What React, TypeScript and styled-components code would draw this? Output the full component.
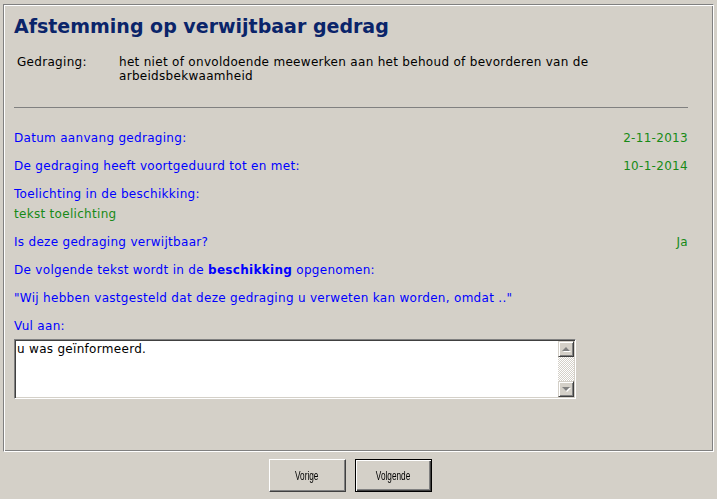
import React from 'react';
import styled, { createGlobalStyle } from 'styled-components';

const GlobalStyle = createGlobalStyle`
  html, body {
    margin: 0;
    padding: 0;
    background: #d4d0c8;
  }
  body {
    font-family: 'DejaVu Sans', Verdana, sans-serif;
  }
`;

const fields = {
  behaviour:
    'het niet of onvoldoende meewerken aan het behoud of bevorderen van de arbeidsbekwaamheid',
  startDate: '2-11-2013',
  endDate: '10-1-2014',
  explanation: 'tekst toelichting',
  blameworthy: 'Ja',
  completion: 'u was geïnformeerd.',
};

export default function App() {
  return (
    <>
      <GlobalStyle />
      <Screen>
        <Panel>
          <Title>Afstemming op verwijtbaar gedrag</Title>

          <BehaviourGrid>
            <BehaviourLabel>Gedraging:</BehaviourLabel>
            <BehaviourText>{fields.behaviour}</BehaviourText>
          </BehaviourGrid>

          <Divider />

          <Fields>
            <FieldRow>
              <span>Datum aanvang gedraging:</span>
              <Value>{fields.startDate}</Value>
            </FieldRow>
            <FieldRow>
              <span>De gedraging heeft voortgeduurd tot en met:</span>
              <Value>{fields.endDate}</Value>
            </FieldRow>
            <FieldBlock $gap={6}>
              <span>Toelichting in de beschikking:</span>
              <Value>{fields.explanation}</Value>
            </FieldBlock>
            <FieldRow>
              <span>Is deze gedraging verwijtbaar?</span>
              <Value>{fields.blameworthy}</Value>
            </FieldRow>
            <FieldRow>
              <span>
                De volgende tekst wordt in de <strong>beschikking</strong> opgenomen:
              </span>
            </FieldRow>
            <Quote>
              "Wij hebben vastgesteld dat deze gedraging u verweten kan worden, omdat .."
            </Quote>
            <FieldBlock $gap={6}>
              <span>Vul aan:</span>
              <Memo>
                <MemoInput defaultValue={fields.completion} spellCheck={false} />
                <ScrollBar>
                  <ScrollButton>
                    <Arrow $dir="up" />
                  </ScrollButton>
                  <ScrollTrack />
                  <ScrollButton>
                    <Arrow $dir="down" />
                  </ScrollButton>
                </ScrollBar>
              </Memo>
            </FieldBlock>
          </Fields>
        </Panel>

        <ButtonBar>
          <NavButton>
            <ButtonLabel>Vorige</ButtonLabel>
          </NavButton>
          <NavButton $default>
            <ButtonLabel>Volgende</ButtonLabel>
          </NavButton>
        </ButtonBar>
      </Screen>
    </>
  );
}

// Styled Components
const Screen = styled.div`
  width: 717px;
  height: 499px;
  box-sizing: border-box;
  padding: 4px 3px 0 3px;
  display: flex;
  flex-direction: column;
  background: #d4d0c8;
  overflow: hidden;
`;

const Panel = styled.div`
  box-sizing: border-box;
  height: 448px;
  border: 1px solid;
  border-color: #808080 #ffffff #ffffff #808080;
  box-shadow: inset 1px 1px 0 #ffffff, inset -1px -1px 0 #808080;
  padding: 9px 25px 0 10px;
  display: flex;
  flex-direction: column;
`;

const Title = styled.h1`
  margin: 0;
  font-size: 19px;
  line-height: 24px;
  font-weight: bold;
  color: #0a246a;
  white-space: nowrap;
`;

const BehaviourGrid = styled.div`
  display: grid;
  grid-template-columns: 102px 1fr;
  margin-top: 17px;
  padding-left: 3px;
  font-size: 12px;
  line-height: 14px;
  letter-spacing: 0.3px;
  color: #000000;
`;

const BehaviourLabel = styled.span``;

const BehaviourText = styled.span`
  max-width: 500px;
`;

const Divider = styled.div`
  height: 1px;
  background: #808080;
  margin: 24px 0 23px;
`;

const Fields = styled.div`
  display: flex;
  flex-direction: column;
  gap: 14px;
  font-size: 12px;
  line-height: 14px;
  letter-spacing: 0.3px;
  color: #0000ff;

  strong {
    font-weight: bold;
  }
`;

const FieldRow = styled.div`
  display: flex;
  justify-content: space-between;
`;

const FieldBlock = styled.div<{ $gap: number }>`
  display: flex;
  flex-direction: column;
  gap: ${({ $gap }) => $gap}px;
`;

const Value = styled.span`
  color: #178a17;
`;

const Quote = styled.div``;

const Memo = styled.div`
  box-sizing: border-box;
  width: 562px;
  height: 60px;
  display: flex;
  padding: 1px;
  border: 1px solid;
  border-color: #808080 #ffffff #ffffff #808080;
  box-shadow: inset 1px 1px 0 #404040, inset -1px -1px 0 #d4d0c8;
  background: #ffffff;
`;

const MemoInput = styled.textarea`
  flex: 1;
  border: none;
  outline: none;
  resize: none;
  overflow: hidden;
  margin: 0;
  padding: 1px 1px;
  background: transparent;
  font-family: 'DejaVu Sans', Verdana, sans-serif;
  font-size: 12px;
  line-height: 14px;
  letter-spacing: 0.3px;
  color: #000000;
`;

const ScrollBar = styled.div`
  width: 16px;
  display: flex;
  flex-direction: column;
`;

const ScrollButton = styled.div`
  box-sizing: border-box;
  height: 16px;
  display: flex;
  align-items: center;
  justify-content: center;
  background: #d4d0c8;
  border: 1px solid;
  border-color: #d4d0c8 #404040 #404040 #d4d0c8;
  box-shadow: inset 1px 1px 0 #ffffff, inset -1px -1px 0 #808080;
`;

const Arrow = styled.div<{ $dir: 'up' | 'down' }>`
  width: 0;
  height: 0;
  border-left: 4px solid transparent;
  border-right: 4px solid transparent;
  ${({ $dir }) =>
    $dir === 'up'
      ? 'border-bottom: 4px solid #808080;'
      : 'border-top: 4px solid #808080;'}
  filter: drop-shadow(1px 1px 0 #ffffff);
`;

const ScrollTrack = styled.div`
  flex: 1;
  background-color: #d4d0c8;
  background-image: conic-gradient(
    #ffffff 25%,
    #d4d0c8 0 50%,
    #ffffff 0 75%,
    #d4d0c8 0
  );
  background-size: 2px 2px;
`;

const ButtonBar = styled.div`
  display: flex;
  justify-content: center;
  gap: 9px;
  margin-top: 7px;
  padding-right: 17px;
`;

const NavButton = styled.button<{ $default?: boolean }>`
  box-sizing: border-box;
  width: 77px;
  height: 33px;
  padding: 0;
  display: flex;
  align-items: center;
  justify-content: center;
  background: #d4d0c8;
  color: #000000;
  cursor: pointer;
  border: 1px solid;
  border-color: ${({ $default }) =>
    $default ? '#000000' : '#ffffff #404040 #404040 #ffffff'};
  box-shadow: ${({ $default }) =>
    $default
      ? 'inset 1px 1px 0 #ffffff, inset -1px -1px 0 #404040, inset -2px -2px 0 #808080'
      : 'inset -1px -1px 0 #808080'};
`;

const ButtonLabel = styled.span`
  display: inline-block;
  font-family: 'Liberation Sans', Arial, sans-serif;
  font-size: 12.5px;
  transform: scaleX(0.66);
  white-space: nowrap;
`;
